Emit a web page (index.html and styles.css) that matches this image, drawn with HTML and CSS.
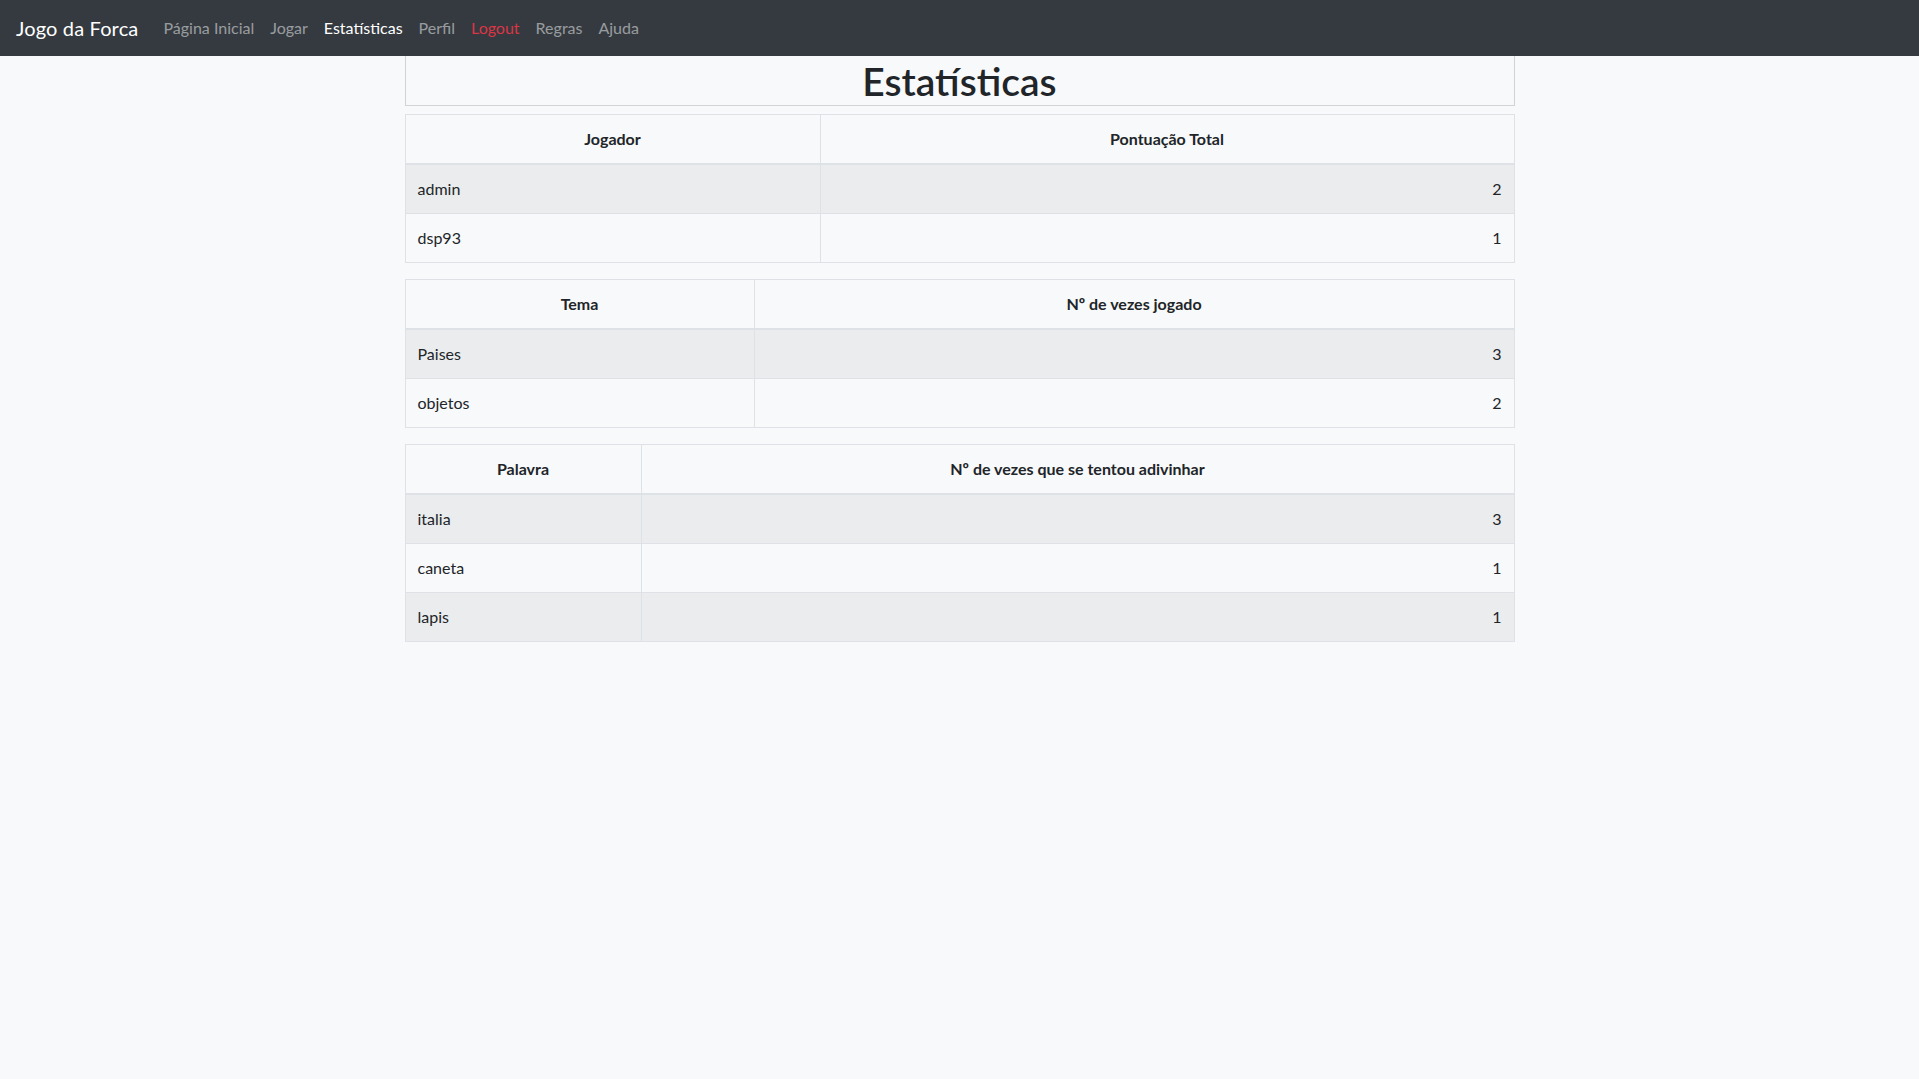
FILE: index.html
```html
<!DOCTYPE html>
<html lang="pt">
<head>
<meta charset="utf-8">
<title>Estatísticas - Jogo da Forca</title>
<link rel="stylesheet" href="styles.css">
</head>
<body>
<nav class="navbar">
  <a class="brand" href="#">Jogo da Forca</a>
  <ul class="nav">
    <li><a class="nav-link" href="#">Página Inicial</a></li>
    <li><a class="nav-link" href="#">Jogar</a></li>
    <li><a class="nav-link active" href="#">Estatísticas</a></li>
    <li><a class="nav-link" href="#">Perfil</a></li>
    <li><a class="nav-link danger" href="#">Logout</a></li>
    <li><a class="nav-link" href="#">Regras</a></li>
    <li><a class="nav-link" href="#">Ajuda</a></li>
  </ul>
</nav>
<main class="container">
  <div class="title-box"><h1>Estatísticas</h1></div>

  <table class="table">
    <colgroup><col class="c-jogador"><col></colgroup>
    <thead><tr><th>Jogador</th><th>Pontuação Total</th></tr></thead>
    <tbody>
      <tr><td>admin</td><td class="num">2</td></tr>
      <tr><td>dsp93</td><td class="num">1</td></tr>
    </tbody>
  </table>

  <table class="table">
    <colgroup><col class="c-tema"><col></colgroup>
    <thead><tr><th>Tema</th><th>Nº de vezes jogado</th></tr></thead>
    <tbody>
      <tr><td>Paises</td><td class="num">3</td></tr>
      <tr><td>objetos</td><td class="num">2</td></tr>
    </tbody>
  </table>

  <table class="table">
    <colgroup><col class="c-palavra"><col></colgroup>
    <thead><tr><th>Palavra</th><th>Nº de vezes que se tentou adivinhar</th></tr></thead>
    <tbody>
      <tr><td>italia</td><td class="num">3</td></tr>
      <tr><td>caneta</td><td class="num">1</td></tr>
      <tr><td>lapis</td><td class="num">1</td></tr>
    </tbody>
  </table>
</main>
</body>
</html>
```

FILE: styles.css
```css
* { box-sizing: border-box; }

html, body {
  margin: 0;
  padding: 0;
}

body {
  background: #f8f9fa;
  color: #212529;
  font-family: "Lato", "Open Sans", "Liberation Sans", sans-serif;
  font-size: 16px;
  line-height: 1.5;
  min-height: 1079px;
}

a { text-decoration: none; }

.navbar {
  background: #343a40;
  display: flex;
  align-items: center;
  padding: 8px 16px;
  height: 56px;
}

.brand {
  color: #fff;
  font-size: 20px;
  line-height: 30px;
  letter-spacing: 0.15px;
  padding: 5px 0;
  margin-right: 17px;
  white-space: nowrap;
}

.nav {
  display: flex;
  list-style: none;
  margin: 0;
  padding: 0;
}

.nav-link {
  display: block;
  padding: 8px 8px;
  color: rgba(255, 255, 255, 0.5);
  white-space: nowrap;
}

.nav-link.active { color: #fff; }
.nav-link.danger { color: #dc3545; }

.container {
  width: 1140px;
  margin: 0 auto;
  padding: 0 15px;
}

.title-box {
  border: 1px solid #d3d3d3;
  border-top: none;
  margin-bottom: 8px;
}

.title-box h1 {
  margin: 0;
  padding-top: 2px;
  font-size: 39px;
  font-weight: 600;
  line-height: 47px;
  text-align: center;
  color: #212529;
}

.table {
  width: 100%;
  border-collapse: collapse;
  table-layout: fixed;
  margin-bottom: 16px;
  border: 1px solid #dee2e6;
}

.c-jogador { width: 415px; }
.c-tema { width: 349px; }
.c-palavra { width: 236px; }

.table th,
.table td {
  padding: 12px;
  border: 1px solid #dee2e6;
  vertical-align: top;
}

.table th {
  text-align: center;
  font-weight: 700;
  border-bottom: 2px solid #dee2e6;
}

.table tbody tr:nth-child(odd) {
  background: rgba(0, 0, 0, 0.05);
}

.table td.num { text-align: right; }
```
